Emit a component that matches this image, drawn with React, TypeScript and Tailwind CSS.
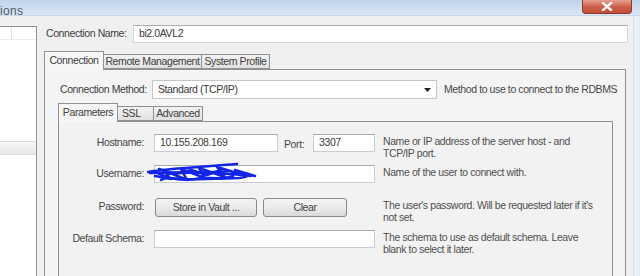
import React from 'react';

function Input({ className = '', children }: { className?: string; children?: React.ReactNode }) {
  return (
    <div
      className={`flex shrink-0 items-center border border-[#c9ccd1] border-t-[#a9acb2] bg-white pl-[5px] text-[#3a3a3a] ${className}`}
    >
      {children}
    </div>
  );
}

function Button({ className = '', children }: { className?: string; children: React.ReactNode }) {
  return (
    <div
      className={`flex shrink-0 items-center justify-center rounded-[3px] border border-[#8a8a8a] bg-gradient-to-b from-[#f4f4f4] via-[#ebebeb] to-[#d9d9d9] text-[#444] ${className}`}
    >
      {children}
    </div>
  );
}

function Scribble() {
  return (
    <svg
      className="pointer-events-none absolute left-[-7px] top-[-3px]"
      width="112"
      height="24"
      viewBox="0 0 112 24"
      fill="none"
      stroke="#1326e8"
      strokeWidth="2.6"
      strokeLinecap="round"
      strokeLinejoin="round"
    >
      <path d="M1 10 C25 6, 55 5, 90 2" />
      <path d="M3 11 C30 10, 60 9, 104 14" />
      <path d="M6 9 L24 17 L16 8 L40 18 L34 7 L58 16 L52 6 L78 15 L70 5 L96 13 L88 8 L108 14" />
      <path d="M8 14 C30 19, 60 17, 92 16 C100 15, 104 13, 98 12" />
      <path d="M14 18 C22 13, 34 20, 48 17 C60 14, 72 19, 86 14" />
      <path d="M20 12 C40 10, 62 11, 84 9" />
      <path d="M12 7 L28 12 L44 8 L60 13 L74 8" />
    </svg>
  );
}

function Row({
  label,
  desc,
  className = '',
  children,
}: {
  label: string;
  desc: React.ReactNode;
  className?: string;
  children: React.ReactNode;
}) {
  return (
    <div className={`flex items-start ${className}`}>
      <div className="flex h-[18px] w-[85px] shrink-0 items-center justify-end text-[#484848]">{label}</div>
      <div className="ml-[10px] flex w-[221px] shrink-0 items-start">{children}</div>
      <div className="ml-[8px] mt-[1px] leading-[12px] text-[#505050]">{desc}</div>
    </div>
  );
}

export default function App() {
  return (
    <div className="flex h-[276px] w-[640px] flex-col overflow-hidden whitespace-nowrap bg-[#f0f0f0] font-['Liberation_Sans',Arial,sans-serif] text-[10.5px] tracking-[-0.4px] text-[#444]">
      {/* title bar */}
      <div className="flex h-[16px] shrink-0 items-start justify-between border-b border-[#c8d6e6] bg-gradient-to-b from-[#bfd4eb] to-[#d9e6f4]">
        <span className="mt-[2px] text-[12px] tracking-[0.3px] text-[#4b5a6a]">ions</span>
        <div className="mr-[8px] flex h-[14px] w-[50px] items-center justify-center rounded-b-[4px] border border-t-0 border-[#8c3a30] bg-gradient-to-b from-[#e5a091] via-[#d0604d] to-[#c24a36]">
          <svg width="12" height="9" viewBox="0 0 12 9">
            <path d="M2 1 L10 8 M10 1 L2 8" stroke="#fff" strokeWidth="2.4" strokeLinecap="square" />
          </svg>
        </div>
      </div>

      <div className="flex min-h-0 flex-1">
        {/* left list */}
        <div className="mt-[10px] flex w-[37px] shrink-0 flex-col border-r border-t border-[#8f9399] bg-white">
          <div className="flex h-[13px] border-b border-[#ececec]">
            <div className="w-[12px] border-r border-[#e2e2e2]" />
          </div>
          <div className="h-[101px]" />
          <div className="h-[14px] border-y border-[#dcdcdc] bg-gradient-to-b from-[#f6f6f6] to-[#e8e8e8]" />
          <div className="flex-1" />
        </div>

        {/* main column */}
        <div className="ml-[7px] flex w-[584px] shrink-0 flex-col">
          <div className="mt-[9px] flex h-[18px] items-center">
            <div className="w-[89px] shrink-0 pl-[2px] text-[#404040]">Connection Name:</div>
            <Input className="h-[18px] flex-1 border-[#d4d6da]">bi2.0AVL2</Input>
          </div>

          {/* outer tabs */}
          <div className="mt-[8px] flex h-[18px] items-end">
            <div className="relative z-10 -mb-px flex h-[19px] w-[60px] items-center justify-center border border-b-0 border-[#8e9196] bg-[#f6f6f6] text-[#404040]">
              Connection
            </div>
            <div className="flex h-[15px] w-[98px] items-center justify-center border border-l-0 border-[#8e9196] bg-gradient-to-b from-[#f2f2f2] to-[#e1e1e1] text-[#404040]">
              Remote Management
            </div>
            <div className="flex h-[15px] w-[68px] items-center justify-center border border-l-0 border-[#8e9196] bg-gradient-to-b from-[#f2f2f2] to-[#e1e1e1] text-[#404040]">
              System Profile
            </div>
          </div>

          <div className="flex min-h-0 w-[582px] flex-1 flex-col border border-b-0 border-[#8e9196] bg-[#f4f4f4]">
            <div className="mt-[10px] flex items-center pl-[15px]">
              <div className="w-[92px] shrink-0 text-[#404040]">Connection Method:</div>
              <div className="flex h-[19px] w-[285px] shrink-0 items-center justify-between border border-[#c3c6cb] bg-white pl-[5px] pr-[5px] text-[#3a3a3a]">
                <span>Standard (TCP/IP)</span>
                <svg width="7" height="4" viewBox="0 0 7 4">
                  <path d="M0 0 H7 L3.5 4 Z" fill="#222" />
                </svg>
              </div>
              <div className="ml-[7px] text-[#484848]">Method to use to connect to the RDBMS</div>
            </div>

            {/* inner tabs */}
            <div className="ml-[13px] mt-[4px] flex h-[18px] items-end">
              <div className="relative z-10 -mb-px flex h-[19px] w-[60px] items-center justify-center border border-b-0 border-[#8e9196] bg-[#f6f6f6] text-[#404040]">
                Parameters
              </div>
              <div className="flex h-[15px] w-[36px] items-center border border-l-0 border-[#8e9196] bg-gradient-to-b from-[#f2f2f2] to-[#e1e1e1] pl-[4px] text-[#404040]">
                SSL
              </div>
              <div className="flex h-[15px] w-[49px] items-center justify-center border border-l-0 border-[#8e9196] bg-gradient-to-b from-[#f2f2f2] to-[#e1e1e1] text-[#404040]">
                Advanced
              </div>
            </div>

            <div className="ml-[13px] flex min-h-0 w-[555px] flex-1 flex-col border border-b-0 border-[#8e9196] bg-[#f2f2f2]">
              <Row
                className="mt-[12px]"
                label="Hostname:"
                desc={
                  <>
                    Name or IP address of the server host - and
                    <br />
                    TCP/IP port.
                  </>
                }
              >
                <Input className="h-[18px] w-[124px]">10.155.208.169</Input>
                <span className="ml-[6px] mt-[3px] w-[29px] shrink-0 text-[#484848]">Port:</span>
                <Input className="h-[18px] w-[62px]">3307</Input>
              </Row>

              <Row className="mt-[6px]" label="Username:" desc="Name of the user to connect with.">
                <div className="relative w-full">
                  <Input className="h-[18px] w-full" />
                  <Scribble />
                </div>
              </Row>

              <Row
                className="mt-[15px]"
                label="Password:"
                desc={
                  <>
                    The user's password. Will be requested later if it's
                    <br />
                    not set.
                  </>
                }
              >
                <Button className="ml-[1px] h-[19px] w-[102px]">Store in Vault ...</Button>
                <Button className="ml-[6px] h-[19px] w-[84px]">Clear</Button>
              </Row>

              <Row
                className="mt-[7px]"
                label="Default Schema:"
                desc={
                  <>
                    The schema to use as default schema. Leave
                    <br />
                    blank to select it later.
                  </>
                }
              >
                <Input className="h-[18px] w-full" />
              </Row>
            </div>
          </div>
        </div>

        {/* right window edge */}
        <div className="ml-[5px] w-[8px] shrink-0 border-l border-[#d6dde6] bg-[#e9eef4]" />
      </div>
    </div>
  );
}
